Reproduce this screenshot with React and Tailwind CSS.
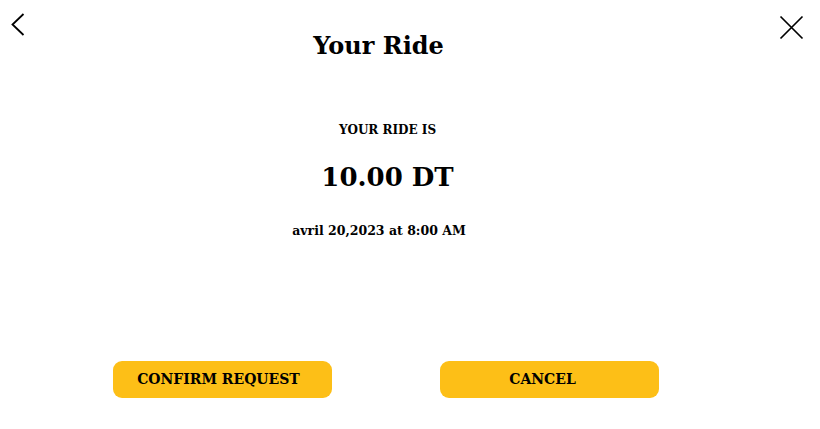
export default function App() {
  return (
    <main className="relative flex h-[429px] w-[820px] flex-col bg-white text-black" style={{ fontFamily: '"DejaVu Serif", "Liberation Serif", serif' }}>
      <div className="flex items-start justify-between">
        <button className="ml-[11px] mt-[13px] text-black">
          <svg width="14" height="23" viewBox="0 0 14 23" fill="none" stroke="currentColor" strokeWidth="1.8">
            <polyline points="12.5,1 1.5,11.5 12.5,22" />
          </svg>
        </button>
        <button className="mr-[16px] mt-[15px] text-black">
          <svg width="25" height="25" viewBox="0 0 25 25" fill="none" stroke="currentColor" strokeWidth="1.7">
            <path d="M1.5 1.5 L23.5 23.5 M23.5 1.5 L1.5 23.5" />
          </svg>
        </button>
      </div>

      <div className="-mt-[6px] flex w-[775px] flex-col items-center">
        <h1 className="pr-[18px] text-[24px] font-bold leading-none">Your Ride</h1>
        <p className="mt-[66px] text-[12px] font-bold uppercase leading-none">Your ride is</p>
        <p className="mt-[28px] text-[26px] font-bold leading-none">10.00 DT</p>
        <p className="mt-[35px] pr-[17px] text-[12.5px] font-bold leading-none">avril 20,2023 at 8:00 AM</p>
      </div>

      <div className="mt-[123px] flex w-[772px] justify-center gap-[108px]">
        <button className="h-[37px] w-[219px] rounded-[9px] bg-[#fdbf17] pr-[8px] text-[14px] font-bold leading-none">CONFIRM REQUEST</button>
        <button className="h-[37px] w-[219px] rounded-[9px] bg-[#fdbf17] pr-[14px] text-[14px] font-bold leading-none">CANCEL</button>
      </div>
    </main>
  );
}
